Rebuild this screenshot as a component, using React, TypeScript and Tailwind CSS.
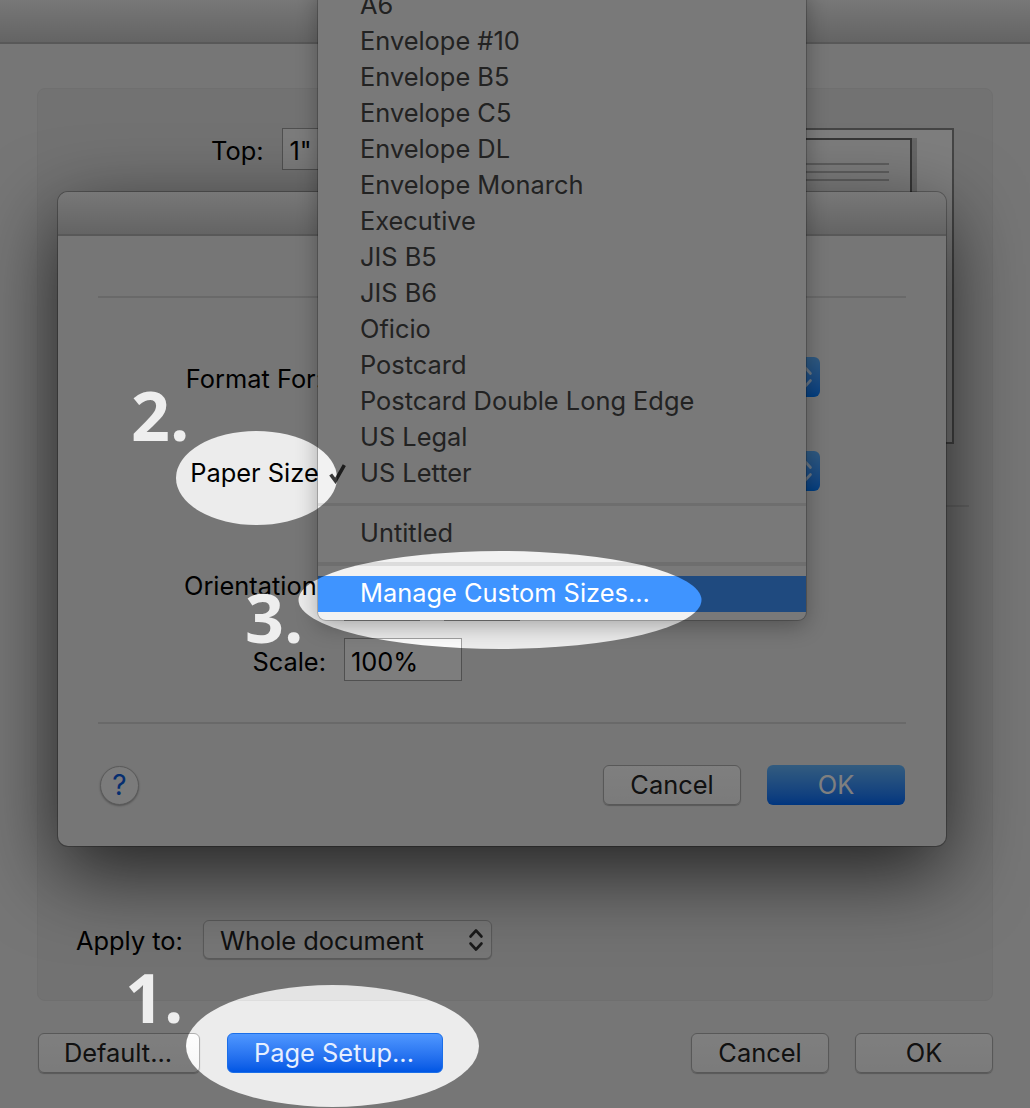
const menuTop = ["A6","Envelope #10","Envelope B5","Envelope C5","Envelope DL","Envelope Monarch","Executive","JIS B5","JIS B6","Oficio","Postcard","Postcard Double Long Edge","US Legal"];

function Updown({ className }: { className: string }) {
  return (
    <svg viewBox="0 0 16 26" className={className} fill="none" stroke="currentColor" strokeWidth="2.6" strokeLinecap="round" strokeLinejoin="round">
      <path d="M2.5 9.5 8 3.5l5.500 6" />
      <path d="M2.500 16.500 8 22.500l5.500-6" />
    </svg>
  );
}

function Btn({ children, w }: { children: string; w: string }) {
  return (
    <div className={`${w} h-10 flex items-center justify-center rounded-[6px] border border-[#b0b0b0] bg-gradient-to-b from-[#fefefe] to-[#f6f6f6] text-[#222] shadow-[0_1px_1px_rgba(0,0,0,0.25)]`}>
      {children}
    </div>
  );
}

function Label({ children, cls }: { children: string; cls?: string }) {
  return <div className={`w-[228px] pt-[4px] text-right whitespace-nowrap text-black ${cls ?? ""}`}>{children}</div>;
}

function Popup() {
  return (
    <div className="ml-[18px] w-[476px] h-10 rounded-[6px] flex justify-end items-center pr-[7px] text-white/75 bg-gradient-to-b from-[#5fb2ff] to-[#007cff]">
      <Updown className="w-[16px] h-[26px]" />
    </div>
  );
}

export default function App() {
  return (
    <div className="relative w-[1030px] h-[1108px] overflow-hidden bg-[#ececec] text-[25.400px] leading-[36px] font-['Inter','Liberation_Sans',sans-serif]">
      <div className="h-[44px] border-b-2 border-[#b0b0b0] bg-gradient-to-b from-[#f0f0f0] to-[#c8c8c8]" />

      <div className="pl-[37px] pr-[37px] pt-[44px]">
        {/* group panel */}
        <div className="relative h-[913px] rounded-[8px] border border-[#dedede] bg-[#e4e4e4] flex flex-col">
          <div className="pt-[39px] flex">
            <div className="ml-[173px] mt-[5px] text-black">Top:</div>
            <div className="ml-[18px] w-[120px] h-[42px] border border-[#a0a0a0] bg-[#f8f8f8] pl-[7px] pt-[4px] text-black">1"</div>
            <div className="ml-auto mr-[38px] w-[454px] h-[316px] border-[2.500px] border-[#8a8a8a] bg-[#fcfcfc] pt-[8px] flex">
              <div className="ml-auto mr-[40px] w-[400px] h-[200px] border-t-[2px] border-r-[2px] border-[#6c6c6c] bg-[#f8f8f8] shadow-[5px_0_0_#cccccc] flex flex-col items-end pt-[23px] gap-[6px] pr-[21px]">
                <div className="w-[300px] h-[2px] bg-[#bcbcbc]" />
                <div className="w-[300px] h-[2px] bg-[#bcbcbc]" />
                <div className="w-[300px] h-[2px] bg-[#bcbcbc]" />
              </div>
            </div>
          </div>
          <div className="mt-[61px] ml-[60px] mr-[23px] h-[2px] bg-[#cdcdcd]" />

          <div className="mt-auto mb-[41px] ml-[38px] flex items-center">
            <div className="pt-[2px] text-black">Apply to:</div>
            <div className="ml-[20px] w-[289px] h-[39px] rounded-[6px] border border-[#b4b4b4] bg-[#ececec] shadow-[0_1px_1px_rgba(0,0,0,0.2)] flex items-center pl-[16px] pr-[7px] text-[#222]">
              <span className="pt-[2px]">Whole document</span>
              <Updown className="ml-auto w-[16px] h-[26px] text-[#333]" />
            </div>
          </div>

          {/* sheet dialog */}
          <div className="absolute left-[20px] top-[103px] w-[888px] h-[654px] rounded-[10px] bg-[#ececec] shadow-[0_0_0_1px_rgba(0,0,0,0.25),0_26px_80px_rgba(0,0,0,0.7)] overflow-hidden flex flex-col">
            <div className="h-[44px] shrink-0 border-b-2 border-[#b0b0b0] bg-gradient-to-b from-[#f0f0f0] to-[#c8c8c8]" />
            <div className="px-[40px] flex flex-col">
              <div className="mt-[60px] h-[2px] bg-[#d2d2d2]" />
              <div className="mt-[59px] flex items-center"><Label cls="pr-[3px]">Format For:</Label><Popup /></div>
              <div className="mt-[54px] flex items-center"><Label>Paper Size:</Label><Popup /></div>
              <div className="mt-[56px] flex items-center h-[74px]">
                <Label cls="pr-[2px]">Orientation:</Label>
                <div className="ml-[18px] w-[76px] h-full border-b-2 border-[#9a9a9a]" />
                <div className="ml-[24px] w-[76px] h-full border-b-2 border-[#9a9a9a]" />
              </div>
              <div className="mt-[17px] flex items-center">
                <Label>Scale:</Label>
                <div className="ml-[18px] w-[118px] h-[43px] border border-[#a0a0a0] bg-[#fbfbfb] pl-[6px] pt-[5px] text-black">100%</div>
              </div>
              <div className="mt-[41px] h-[2px] bg-[#d2d2d2]" />
              <div className="mt-[41px] flex items-center pl-[2px] pr-[1px]">
                <div className="w-[39px] h-[39px] rounded-full border border-[#b4b4b4] bg-[#f6f6f6] shadow-[0_1px_2px_rgba(0,0,0,0.3)] flex items-center justify-center text-[28px] text-[#0a5ce0]">?</div>
                <div className="ml-auto"><Btn w="w-[138px]">Cancel</Btn></div>
                <div className="ml-[26px] w-[138px] h-10 rounded-[6px] flex items-center justify-center text-white bg-gradient-to-b from-[#66b8ff] to-[#006cff]">OK</div>
              </div>
            </div>
          </div>
        </div>

        {/* window footer buttons */}
        <div className="mt-[32px] pl-[1px] flex">
          <Btn w="w-[162px]"><span className="-ml-[2px]">Default...</span></Btn>
          <div className="ml-[27px] w-[216px] h-10 rounded-[6px] border border-[#1a6ee8] flex items-center justify-center text-[#e6efff] bg-gradient-to-b from-[#4f97ff] to-[#0056e4]"><span className="-ml-[2px]">Page Setup...</span></div>
          <div className="ml-auto"><Btn w="w-[138px]">Cancel</Btn></div>
          <div className="ml-[26px]"><Btn w="w-[138px]">OK</Btn></div>
        </div>
      </div>

      {/* popup menu */}
      <div className="absolute left-[318px] top-[-13px] w-[488px] rounded-b-[8px] bg-[#f2f2f2] text-[#454545] shadow-[0_0_0_1px_rgba(0,0,0,0.2),0_6px_22px_rgba(0,0,0,0.3)] pb-[8px]">
        {menuTop.map((m) => (
          <div key={m} className="h-[36px] pl-[42px] whitespace-nowrap">{m}</div>
        ))}
        <div className="relative h-[36px] pl-[42px]">
          <svg viewBox="0 0 20 20" className="absolute left-[9px] top-[8px] w-[21px] h-[21px] text-[#3a3a3a]" fill="none" stroke="currentColor" strokeWidth="3.400">
            <path d="M3.500 11 8 17 16.500 2" />
          </svg>
          US Letter
        </div>
        <div className="mt-[12px] h-[3px] bg-[#dcdcdc]" />
        <div className="mt-[9px] h-[36px] pl-[42px]">Untitled</div>
        <div className="mt-[11px] h-[4px] bg-[#dcdcdc]" />
        <div className="mt-[10px] h-[36px] pl-[42px] leading-[34px] bg-[#3f94ff] text-white">Manage Custom Sizes...</div>
      </div>

      {/* dimming layer with spotlight holes */}
      <svg className="absolute inset-0 pointer-events-none" width="1030" height="1108">
        <defs>
          <mask id="spot">
            <rect width="1030" height="1108" fill="white" />
            <ellipse cx="332.500" cy="1046" rx="146.500" ry="61" fill="black" />
            <ellipse cx="256.500" cy="478" rx="80.500" ry="47" fill="black" />
            <ellipse cx="500" cy="600" rx="201.500" ry="49" fill="black" />
          </mask>
        </defs>
        <rect width="1030" height="1108" fill="black" fillOpacity="0.5" mask="url(#spot)" />
      </svg>

      {/* step numbers */}
      <div className="absolute left-[125px] top-[957px] text-[68px] leading-[80px] font-bold text-[#eeeeee] font-['Open_Sans',sans-serif]">1.</div>
      <div className="absolute left-[131px] top-[375px] text-[68px] leading-[80px] font-bold text-[#eeeeee] font-['Open_Sans',sans-serif]">2.</div>
      <div className="absolute left-[245px] top-[577px] text-[68px] leading-[80px] font-bold text-[#eeeeee] font-['Open_Sans',sans-serif]">3.</div>
    </div>
  );
}
